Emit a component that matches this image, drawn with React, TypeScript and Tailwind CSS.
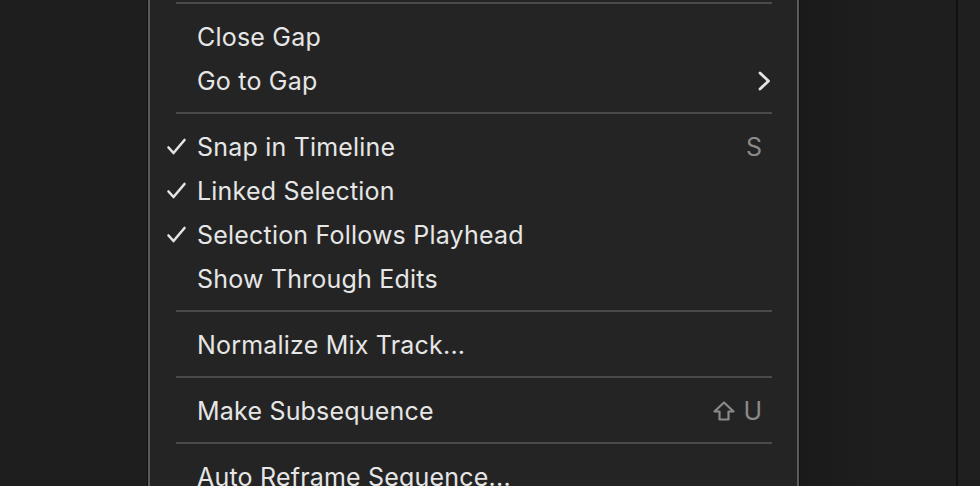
import React from "react";

const Check = () => (
  <svg width="22" height="20" viewBox="0 0 22 20" className="block">
    <path d="M2.5 10.5 L7.5 16 L18.5 3" fill="none" stroke="#e4e4e4" strokeWidth="2.6" strokeLinecap="round" strokeLinejoin="round" />
  </svg>
);

const Chevron = () => (
  <svg width="16" height="22" viewBox="0 0 16 22" className="block">
    <path d="M4 3 L12.5 11 L4 19" fill="none" stroke="#e4e4e4" strokeWidth="2.8" strokeLinecap="round" strokeLinejoin="round" />
  </svg>
);

const Shift = () => (
  <svg width="24" height="22" viewBox="0 0 24 22" className="block">
    <path d="M12 2.5 L21.5 11.5 L16.5 11.5 L16.5 19.5 L7.5 19.5 L7.5 11.5 L2.5 11.5 Z" fill="none" stroke="#8a8a8a" strokeWidth="2.2" strokeLinejoin="round" />
  </svg>
);

const Sep = ({ first }: { first?: boolean }) => (
  <div className={`${first ? "-mt-[7px]" : ""} shrink-0 pt-[9px] pb-[11px] pl-[26px] pr-[25px]`}>
    <div className="h-[2px] bg-[#4a4a4a]" />
  </div>
);

const Item = ({
  label,
  checked,
  right,
}: {
  label: string;
  checked?: boolean;
  right?: React.ReactNode;
}) => (
  <div className="h-[44px] shrink-0 flex items-center pl-[16px] pr-[35px]">
    <div className="w-[31px] flex items-center">{checked ? <Check /> : null}</div>
    <div className="flex-1 text-[25px] leading-none text-[#e6e6e6] whitespace-nowrap tracking-[0.2px]">{label}</div>
    {right}
  </div>
);

export default function App() {
  return (
    <div
      className="w-[980px] h-[486px] overflow-hidden flex bg-[#1e1e1e]"
      style={{ fontFamily: "Inter, 'Noto Sans', sans-serif" }}
    >
      <div className="w-[147px] shrink-0 bg-[#1e1e1e]" />
      <div className="w-[653px] shrink-0 border-x border-[#121212]">
        <div className="h-full overflow-hidden bg-[#242424] border-x-2 border-[#5b5b5b] flex flex-col">
          <Sep first />
          <Item label="Close Gap" />
          <Item label="Go to Gap" right={<div className="-mr-[10px]"><Chevron /></div>} />
          <Sep />
          <Item
            label="Snap in Timeline"
            checked
            right={<span className="text-[25px] leading-none text-[#8a8a8a]">S</span>}
          />
          <Item label="Linked Selection" checked />
          <Item label="Selection Follows Playhead" checked />
          <Item label="Show Through Edits" />
          <Sep />
          <Item label="Normalize Mix Track..." />
          <Sep />
          <Item
            label="Make Subsequence"
            right={
              <div className="flex items-center gap-[7px]">
                <Shift />
                <span className="text-[25px] leading-none text-[#8a8a8a]">U</span>
              </div>
            }
          />
          <Sep />
          <Item label="Auto Reframe Sequence..." />
        </div>
      </div>
      <div className="w-[156px] shrink-0 bg-gradient-to-r from-[#1a1a1a] via-[#1e1e1e] to-[#1e1e1e]" />
      <div className="w-[2px] shrink-0 bg-[#101010]" />
      <div className="flex-1 bg-[#1f1f1f]" />
    </div>
  );
}
